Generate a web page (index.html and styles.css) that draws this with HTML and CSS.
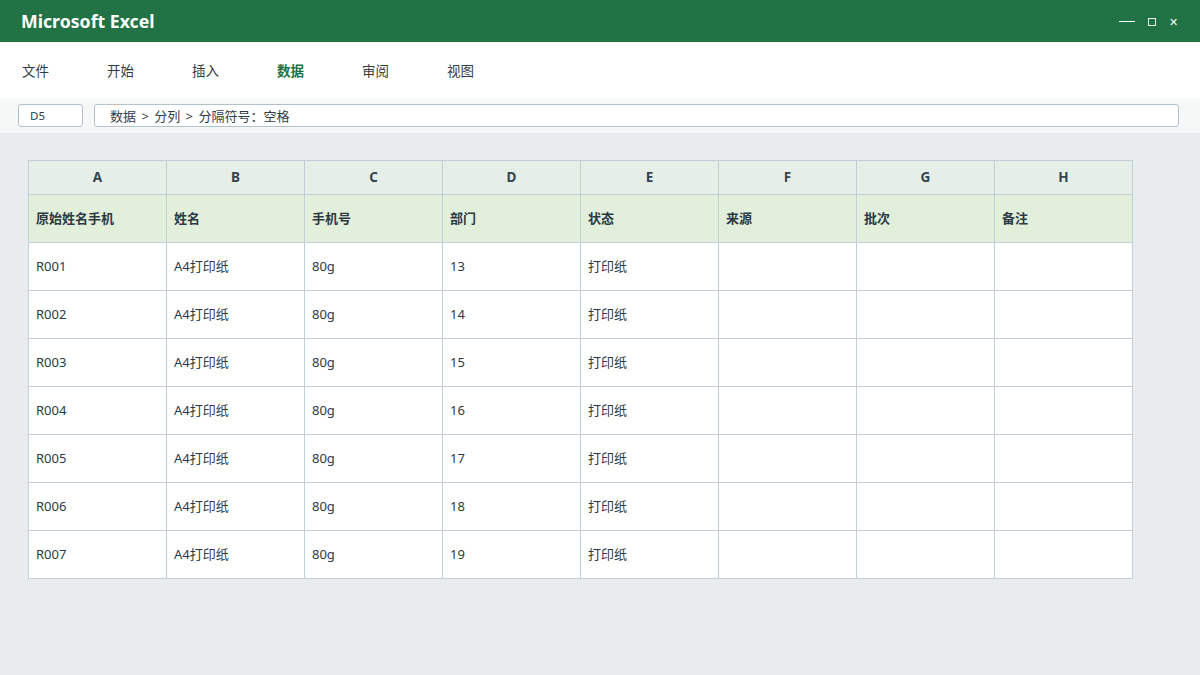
FILE: index.html
```html
<!DOCTYPE html>
<html lang="zh-CN">
<head>
  <meta charset="UTF-8" />
  <meta name="viewport" content="width=device-width, initial-scale=1.0" />
  <title>Microsoft Excel</title>
  <link rel="stylesheet" href="styles.css">
</head>
<body>
  <!-- ===== TITLE BAR ===== -->
  <header class="titlebar">
    <h1>Microsoft Excel</h1>
    <div class="win-controls">
      <span class="ctl-min"></span>
      <span class="ctl-max"></span>
      <span class="ctl-close">&#x2715;</span>
    </div>
  </header>

  <!-- ===== RIBBON TABS ===== -->
  <nav class="tabs">
    <a href="#">文件</a>
    <a href="#">开始</a>
    <a href="#">插入</a>
    <a href="#" class="active">数据</a>
    <a href="#">审阅</a>
    <a href="#">视图</a>
  </nav>

  <!-- ===== FORMULA BAR ===== -->
  <div class="formula-bar">
    <div class="name-box">D5</div>
    <div class="formula">数据 &gt; 分列 &gt; 分隔符号：空格</div>
  </div>

  <!-- ===== SHEET ===== -->
  <main class="sheet">
    <table class="grid">
      <thead>
        <tr class="col-letters">
          <th>A</th><th>B</th><th>C</th><th>D</th><th>E</th><th>F</th><th>G</th><th>H</th>
        </tr>
      </thead>
      <tbody>
        <tr class="fields">
          <td>原始姓名手机</td><td>姓名</td><td>手机号</td><td>部门</td><td>状态</td><td>来源</td><td>批次</td><td>备注</td>
        </tr>
        <tr><td>R001</td><td>A4打印纸</td><td>80g</td><td>13</td><td>打印纸</td><td></td><td></td><td></td></tr>
        <tr><td>R002</td><td>A4打印纸</td><td>80g</td><td>14</td><td>打印纸</td><td></td><td></td><td></td></tr>
        <tr><td>R003</td><td>A4打印纸</td><td>80g</td><td>15</td><td>打印纸</td><td></td><td></td><td></td></tr>
        <tr><td>R004</td><td>A4打印纸</td><td>80g</td><td>16</td><td>打印纸</td><td></td><td></td><td></td></tr>
        <tr><td>R005</td><td>A4打印纸</td><td>80g</td><td>17</td><td>打印纸</td><td></td><td></td><td></td></tr>
        <tr><td>R006</td><td>A4打印纸</td><td>80g</td><td>18</td><td>打印纸</td><td></td><td></td><td></td></tr>
        <tr><td>R007</td><td>A4打印纸</td><td>80g</td><td>19</td><td>打印纸</td><td></td><td></td><td></td></tr>
      </tbody>
    </table>
  </main>
</body>
</html>
```

FILE: styles.css
```css
:root {
  --green: #217346;
  --text: #2c3a45;
  --grid: #c3cfd6;
  --sheet-bg: #e8ecef;
}
* { box-sizing: border-box; margin: 0; padding: 0; }

body {
  font-family: "Noto Sans", "Noto Sans CJK SC", sans-serif;
  color: var(--text);
  background: var(--sheet-bg);
  height: 100vh;
  display: flex;
  flex-direction: column;
}

/* ===== TITLE BAR ===== */
.titlebar {
  height: 42px;
  background: var(--green);
  color: #ffffff;
  display: flex;
  align-items: center;
  justify-content: space-between;
  padding: 0 22px 0 21px;
}
.titlebar h1 {
  font-size: 17.7px;
  font-weight: 700;
}
.win-controls {
  display: flex;
  align-items: center;
  gap: 13px;
}
.ctl-min {
  width: 16px;
  height: 1px;
  background: #ffffff;
  margin-top: 1px;
}
.ctl-max {
  width: 8px;
  height: 8px;
  border: 1px solid #e6f0ea;
  margin-top: 2px;
}
.ctl-close {
  font-size: 11px;
  line-height: 1;
  margin-top: 1px;
}

/* ===== TABS ===== */
.tabs {
  height: 56px;
  background: #ffffff;
  display: flex;
  align-items: center;
  padding-left: 22px;
}
.tabs a {
  width: 85px;
  font-size: 13.5px;
  color: #333d45;
  text-decoration: none;
}
.tabs a.active {
  color: var(--green);
  font-weight: 700;
}

/* ===== FORMULA BAR ===== */
.formula-bar {
  height: 35px;
  background: #f6f8f8;
  display: flex;
  align-items: center;
  gap: 11px;
  padding: 0 21px 0 18px;
}
.name-box,
.formula {
  height: 23px;
  background: #ffffff;
  border: 1px solid #b3c1ca;
  border-radius: 3px;
  font-size: 12.5px;
  display: flex;
  align-items: center;
  color: #333d45;
}
.name-box {
  width: 65px;
  padding-left: 11px;
  font-size: 11.5px;
}
.formula {
  flex: 1;
  padding-left: 15px;
  font-size: 13px;
  word-spacing: 2px;
}

/* ===== SHEET ===== */
.sheet {
  flex: 1;
  padding: 27px 28px;
}
.grid {
  border-collapse: collapse;
  table-layout: fixed;
  width: 1105px;
  background: #ffffff;
  font-size: 13px;
}
.grid th,
.grid td {
  border: 1px solid var(--grid);
  width: 138px;
}
.col-letters th {
  height: 34px;
  padding-bottom: 2px;
  background: #e6eee8;
  font-weight: 700;
  font-size: 13.5px;
  text-align: center;
  color: #34444f;
}
.grid td {
  height: 48px;
  padding: 0 0 2px 7px;
  text-align: left;
}
.fields td {
  background: #e2efda;
  font-weight: 700;
}
```
